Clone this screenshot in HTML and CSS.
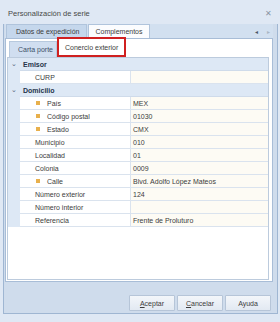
FILE: index.html
```html
<!DOCTYPE html>
<html lang="es">
<head>
    <meta charset="UTF-8">
    <title>Personalización de serie</title>
    <link rel="stylesheet" href="styles.css">
</head>
<body>
    <div class="window">
        <div class="titlebar">
            <span class="title">Personalización de serie</span>
            <span class="close">✕</span>
        </div>
        <div class="client">
            <div class="tabstrip">
                <div class="tab">Datos de expedición</div>
                <div class="tab active">Complementos</div>
                <div class="arrows"><span class="arr">◂</span><span class="arr dim">▸</span></div>
            </div>
            <div class="page">
                <div class="subtabs">
                    <div class="subtab">Carta porte</div>
                    <div class="subtab active">Conercio exterior</div>
                </div>
                <div class="subpage">
                    <div class="grid">
                        <div class="row cat"><span class="indent">⌄</span><span class="catname">Emisor</span></div>
                        <div class="row"><span class="indent"></span><span class="name">CURP</span><span class="value"></span></div>
                        <div class="row cat"><span class="indent">⌄</span><span class="catname">Domicilio</span></div>
                        <div class="row"><span class="indent"></span><span class="name req"><i class="sq"></i>País</span><span class="value">MEX</span></div>
                        <div class="row"><span class="indent"></span><span class="name req"><i class="sq"></i>Código postal</span><span class="value">01030</span></div>
                        <div class="row"><span class="indent"></span><span class="name req"><i class="sq"></i>Estado</span><span class="value">CMX</span></div>
                        <div class="row"><span class="indent"></span><span class="name">Municipio</span><span class="value">010</span></div>
                        <div class="row"><span class="indent"></span><span class="name">Localidad</span><span class="value">01</span></div>
                        <div class="row"><span class="indent"></span><span class="name">Colonia</span><span class="value">0009</span></div>
                        <div class="row"><span class="indent"></span><span class="name req"><i class="sq"></i>Calle</span><span class="value">Blvd. Adolfo López Mateos</span></div>
                        <div class="row"><span class="indent"></span><span class="name">Número exterior</span><span class="value">124</span></div>
                        <div class="row"><span class="indent"></span><span class="name">Número interior</span><span class="value"></span></div>
                        <div class="row"><span class="indent"></span><span class="name">Referencia</span><span class="value">Frente de Proluturo</span></div>
                    </div>
                </div>
            </div>
            <div class="buttons">
                <button class="btn"><u>A</u>ceptar</button>
                <button class="btn"><u>C</u>ancelar</button>
                <button class="btn">Ayuda</button>
            </div>
        </div>
    </div>
</body>
</html>
```

FILE: styles.css
```css
body {
    margin: 0;
    font-family: 'Liberation Sans', Arial, sans-serif;
    font-size: 7px;
    color: #3c3c3c;
}
.window {
    width: 280px;
    height: 322px;
    box-sizing: border-box;
    background-color: #dfe8f4;
    padding: 0 2px 8px 3px;
    display: flex;
    flex-direction: column;
}
.titlebar {
    height: 24px;
    display: flex;
    align-items: center;
    padding: 3px 6px 0 5px;
    box-sizing: border-box;
}
.title {
    flex: 1;
    font-size: 7.5px;
    color: #484848;
}
.close {
    font-size: 8px;
    color: #8a95a2;
}
.client {
    flex: 1;
    display: flex;
    flex-direction: column;
    background-color: #cfdcec;
    border-left: 1px solid #9fb6d2;
    border-right: 1px solid #9fb6d2;
    border-bottom: 1px solid #9fb6d2;
    padding: 0 4px 0 1px;
}
.tabstrip {
    height: 14px;
    display: flex;
    align-items: stretch;
    background-color: #d2e0f0;
    padding-left: 1px;
}
.tab {
    padding: 0 7px 0 9px;
    display: flex;
    align-items: center;
    background-color: #c5d7ec;
    border: 1px solid #b0c4dc;
    border-bottom: none;
    margin-right: 1px;
}
.tab.active {
    background-color: #fbfcfe;
    padding: 0 6px 0 6px;
}
.arrows {
    margin-left: auto;
    display: flex;
    align-items: center;
    gap: 9px;
    padding-right: 3px;
    font-size: 6px;
}
.arr {
    color: #4c5866;
}
.arr.dim {
    color: #aab6c4;
}
.page {
    height: 241px;
    background-color: #ffffff;
    border: 1px solid #a8bdd7;
    padding: 0 3px 1px 1px;
    display: flex;
    flex-direction: column;
}
.subtabs {
    height: 18px;
    display: flex;
    align-items: flex-end;
    padding-left: 2px;
}
.subtab {
    height: 15px;
    display: flex;
    align-items: center;
    padding: 0 3px 0 8px;
    background-color: #d0def0;
    border: 1px solid #b7c9de;
    border-bottom: none;
    color: #3d5068;
}
.subtab.active {
    height: 16px;
    background-color: #ffffff;
    border: 2px solid #d02020;
    padding: 0 6px 0 6px;
    color: #3c3c3c;
}
.subpage {
    flex: 1;
    border: 1px solid #bccbdd;
    background-color: #ffffff;
}
.grid {
    display: flex;
    flex-direction: column;
}
.row {
    height: 13px;
    display: flex;
}
.indent {
    width: 12px;
    background-color: #dde8f5;
    display: flex;
    align-items: center;
    justify-content: center;
    color: #55657a;
    font-size: 7px;
    line-height: 1;
    padding-bottom: 2px;
    box-sizing: border-box;
}
.name {
    width: 111px;
    box-sizing: border-box;
    padding-left: 15px;
    display: flex;
    align-items: center;
    border-bottom: 1px solid #dae3ee;
    border-right: 1px solid #dae3ee;
    background-color: #ffffff;
}
.name.req {
    padding-left: 16px;
}
.sq {
    width: 4px;
    height: 4px;
    background-color: #e8b04c;
    margin-right: 7px;
}
.value {
    flex: 1;
    padding-left: 2px;
    display: flex;
    align-items: center;
    background-color: #fdfbf4;
    border-bottom: 1px solid #dae3ee;
}
.row.cat .catname {
    flex: 1;
    background-color: #dde8f5;
    font-weight: bold;
    display: flex;
    align-items: center;
    padding-left: 3px;
    border-bottom: 1px solid #cfdbea;
    color: #25344a;
}
.buttons {
    flex: 1;
    display: flex;
    justify-content: flex-end;
    align-items: flex-start;
    gap: 2px;
    padding-top: 13px;
    padding-right: 2px;
}
.btn {
    width: 46px;
    height: 16px;
    font-family: 'Liberation Sans', Arial, sans-serif;
    font-size: 7px;
    color: #3c3c3c;
    background: linear-gradient(#f3f6fa, #e2e9f2);
    border: 1px solid #b6c5d8;
    border-radius: 1px;
    padding: 0;
}
```
